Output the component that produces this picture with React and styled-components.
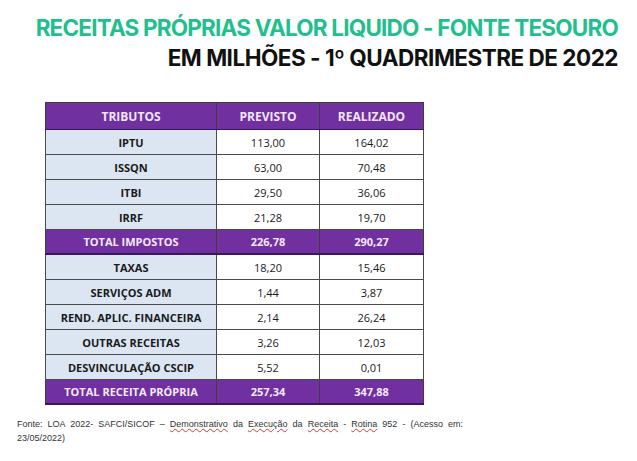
import React from "react";
import styled, { createGlobalStyle } from "styled-components";

const Global = createGlobalStyle`
  html, body { margin: 0; padding: 0; background: #fff; }
  body { width: 637px; height: 461px; overflow: hidden; }
`;

const Page = styled.div`
  width: 637px;
  height: 461px;
  display: flex;
  flex-direction: column;
  box-sizing: border-box;
  padding-top: 13px;
`;

const TitleBlock = styled.div`
  display: flex;
  flex-direction: column;
  align-items: flex-end;
  padding-right: 19px;
  font-family: "Inter", "Liberation Sans", sans-serif;
  font-weight: 700;
  line-height: 30px;
`;

const Title = styled.div`
  font-size: ${(p) => p.$size}px;
  color: ${(p) => p.$color};
  letter-spacing: ${(p) => p.$ls}px;
  white-space: nowrap;
`;

const TableWrap = styled.div`
  margin-top: 29px;
  margin-left: 45px;
`;

const Table = styled.table`
  border-collapse: collapse;
  width: 379px;
  font-family: "Open Sans", "Liberation Sans", sans-serif;
  font-size: 11px;
  color: #1a1a1a;
  text-align: center;
`;

const Th = styled.th`
  background: #7030a0;
  color: #f1e6fb;
  font-weight: 700;
  font-size: 12px;
  height: 26px;
  padding: 0;
  border: 1px solid #3e3e3e;
  border-bottom: 1px solid #3a1660;
`;

const Td = styled.td`
  height: 24px;
  padding: 0;
  border: 1px solid #4a4a4a;
  background: ${(p) => (p.$label ? "#dce6f2" : "#ffffff")};
  font-weight: ${(p) => (p.$label ? 700 : 400)};
`;

const TotalTd = styled.td`
  height: 23px;
  padding: 0;
  background: #7030a0;
  color: #f3eafb;
  font-weight: 700;
  border: 1px solid #3e3e3e;
  border-bottom: 2px solid #3a1660;
`;

const Footnote = styled.p`
  margin: 12px 0 0 17px;
  width: 446px;
  font-family: "Liberation Sans", "Open Sans", sans-serif;
  font-size: 9px;
  line-height: 14px;
  color: #333;
  text-align: justify;
  text-align-last: left;
`;

const Spell = styled.span`
  text-decoration: underline wavy #d23b3b;
  text-decoration-thickness: 1px;
  text-underline-offset: 1px;
`;

const rows = [
  ["IPTU", "113,00", "164,02"],
  ["ISSQN", "63,00", "70,48"],
  ["ITBI", "29,50", "36,06"],
  ["IRRF", "21,28", "19,70"],
  ["TOTAL IMPOSTOS", "226,78", "290,27", true],
  ["TAXAS", "18,20", "15,46"],
  ["SERVIÇOS ADM", "1,44", "3,87"],
  ["REND. APLIC. FINANCEIRA", "2,14", "26,24"],
  ["OUTRAS RECEITAS", "3,26", "12,03"],
  ["DESVINCULAÇÃO CSCIP", "5,52", "0,01"],
  ["TOTAL RECEITA PRÓPRIA", "257,34", "347,88", true],
];

export default function App() {
  return (
    <Page>
      <Global />
      <TitleBlock>
        <Title $size={22.5} $color="#1fbf8e" $ls={-0.8}>
          RECEITAS PRÓPRIAS VALOR LIQUIDO - FONTE TESOURO
        </Title>
        <Title $size={22.5} $color="#111" $ls={-0.5}>
          EM MILHÕES - 1º QUADRIMESTRE DE 2022
        </Title>
      </TitleBlock>
      <TableWrap>
        <Table>
          <colgroup>
            <col style={{ width: 171 }} />
            <col style={{ width: 103 }} />
            <col style={{ width: 104 }} />
          </colgroup>
          <thead>
            <tr>
              <Th>TRIBUTOS</Th>
              <Th>PREVISTO</Th>
              <Th>REALIZADO</Th>
            </tr>
          </thead>
          <tbody>
            {rows.map(([a, b, c, total]) =>
              total ? (
                <tr key={a}>
                  <TotalTd>{a}</TotalTd>
                  <TotalTd>{b}</TotalTd>
                  <TotalTd>{c}</TotalTd>
                </tr>
              ) : (
                <tr key={a}>
                  <Td $label>{a}</Td>
                  <Td>{b}</Td>
                  <Td>{c}</Td>
                </tr>
              )
            )}
          </tbody>
        </Table>
      </TableWrap>
      <Footnote>
        Fonte: LOA 2022- SAFCI/SICOF – <Spell>Demonstrativo</Spell> da{" "}
        <Spell>Execução</Spell> da <Spell>Receita</Spell> - <Spell>Rotina</Spell> 952 - (Acesso em:
        23/05/2022)
      </Footnote>
    </Page>
  );
}
